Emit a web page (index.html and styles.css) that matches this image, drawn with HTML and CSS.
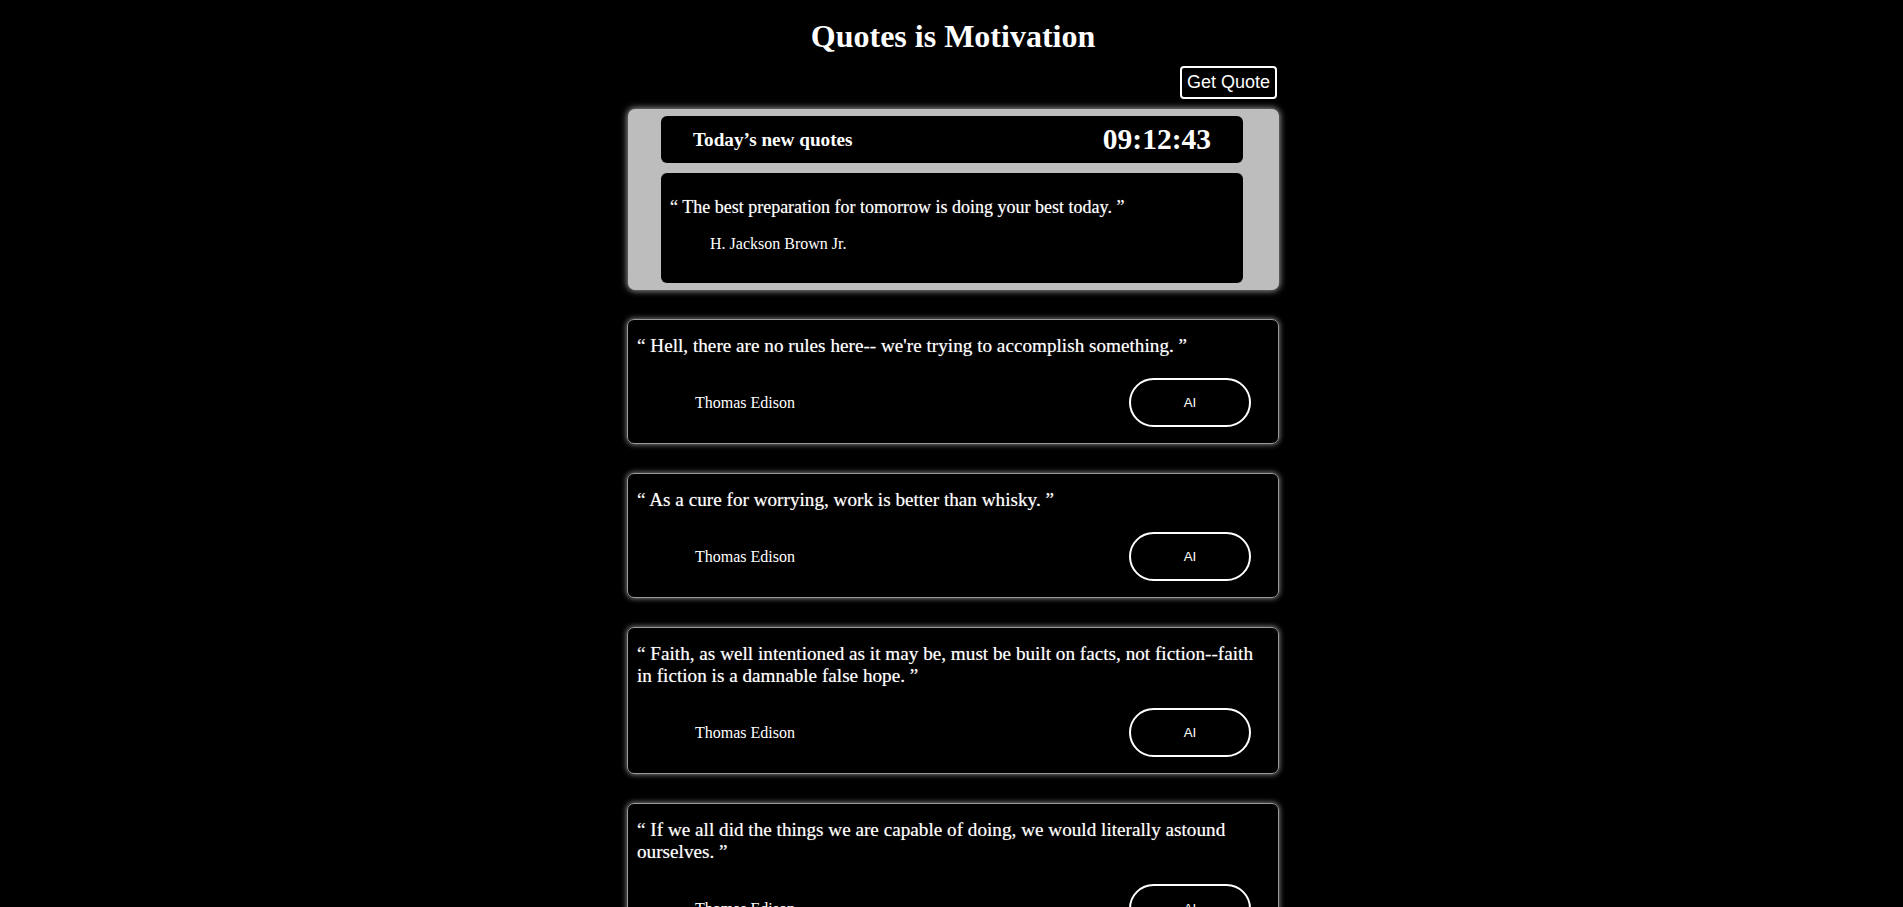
FILE: index.html
```html
<!DOCTYPE html>
<html lang="en">
<head>
<meta charset="utf-8">
<title>Quotes is Motivation</title>
<link rel="stylesheet" href="styles.css">
</head>
<body>
<div class="page">
  <h1 class="title">Quotes is Motivation</h1>
  <div class="container">
    <div class="toolbar">
      <button class="get-btn" type="button">Get Quote</button>
    </div>
    <section class="today">
      <div class="today-head">
        <h3 class="today-title">Today’s new quotes</h3>
        <div class="clock">09:12:43</div>
      </div>
      <div class="today-body">
        <p class="today-quote">“ The best preparation for tomorrow is doing your best today. ”</p>
        <p class="today-author">H. Jackson Brown Jr.</p>
      </div>
    </section>

    <div class="list">
      <article class="card">
        <p class="quote">“ Hell, there are no rules here-- we're trying to accomplish something. ”</p>
        <div class="card-row">
          <span class="author">Thomas Edison</span>
          <button class="ai-btn" type="button">AI</button>
        </div>
      </article>
      <article class="card">
        <p class="quote">“ As a cure for worrying, work is better than whisky. ”</p>
        <div class="card-row">
          <span class="author">Thomas Edison</span>
          <button class="ai-btn" type="button">AI</button>
        </div>
      </article>
      <article class="card">
        <p class="quote">“ Faith, as well intentioned as it may be, must be built on facts, not fiction--faith in fiction is a damnable false hope. ”</p>
        <div class="card-row">
          <span class="author">Thomas Edison</span>
          <button class="ai-btn" type="button">AI</button>
        </div>
      </article>
      <article class="card">
        <p class="quote">“ If we all did the things we are capable of doing, we would literally astound ourselves. ”</p>
        <div class="card-row">
          <span class="author">Thomas Edison</span>
          <button class="ai-btn" type="button">AI</button>
        </div>
      </article>
    </div>
  </div>
</div>
</body>
</html>
```
FILE: styles.css
```css
html, body {
  background: #000;
}
body {
  margin: 0;
  color: #fff;
  font-family: "Liberation Serif", "Times New Roman", serif;
}
.page {
  padding-left: 3px;
}
.title {
  margin: 18px 0 0;
  font-size: 32px;
  font-weight: bold;
  text-align: center;
  line-height: normal;
}
.container {
  width: 652px;
  margin: 0 auto;
}
.toolbar {
  display: flex;
  justify-content: flex-end;
  margin-top: 11px;
  padding-right: 2px;
}
.get-btn {
  box-sizing: border-box;
  height: 33px;
  padding: 0 5px;
  background: #000;
  color: #fff;
  border: 2px solid #fff;
  border-radius: 4px;
  font-family: "Liberation Sans", Arial, sans-serif;
  font-size: 18px;
}
.today {
  margin-top: 10px;
  margin-left: 1px;
  padding: 7px 36px 7px 33px;
  background: #bdbdbd;
  border-radius: 7px;
  box-shadow: 0 0 6px 1px rgba(255, 255, 255, 0.6);
  display: flex;
  flex-direction: column;
  gap: 10px;
}
.today-head {
  height: 47px;
  background: #000;
  border-radius: 6px;
  display: flex;
  align-items: center;
  justify-content: space-between;
  padding: 0 32px;
}
.today-title {
  margin: 0;
  font-size: 19.2px;
  font-weight: bold;
}
.clock {
  font-size: 29.5px;
  font-weight: bold;
}
.today-body {
  box-sizing: border-box;
  height: 110px;
  background: #000;
  border-radius: 6px;
  padding: 24px 9px 0;
}
.today-quote {
  margin: 0;
  font-size: 18px;
  text-shadow: 0 0 1px rgba(255, 255, 255, 0.5);
}
.today-author {
  margin: 17px 0 0 40px;
  font-size: 16px;
}
.list {
  margin-top: 29px;
  display: flex;
  flex-direction: column;
  gap: 29px;
}
.card {
  border: 1px solid #9a9a9a;
  border-radius: 7px;
  box-shadow: 0 0 5px 1px rgba(255, 255, 255, 0.45);
  padding: 15px 9px 16px 9px;
}
.quote {
  margin: 0;
  font-size: 19.2px;
  text-shadow: 0 0 1px rgba(255, 255, 255, 0.5);
}
.card-row {
  display: flex;
  align-items: center;
  justify-content: space-between;
  margin-top: 21px;
  margin-right: 18px;
}
.author {
  margin-left: 58px;
  font-size: 16px;
}
.ai-btn {
  box-sizing: border-box;
  width: 122px;
  height: 49px;
  background: #000;
  color: #fff;
  border: 2px solid #fff;
  border-radius: 25px;
  font-family: "Liberation Sans", Arial, sans-serif;
  font-size: 13.33px;
}
```
